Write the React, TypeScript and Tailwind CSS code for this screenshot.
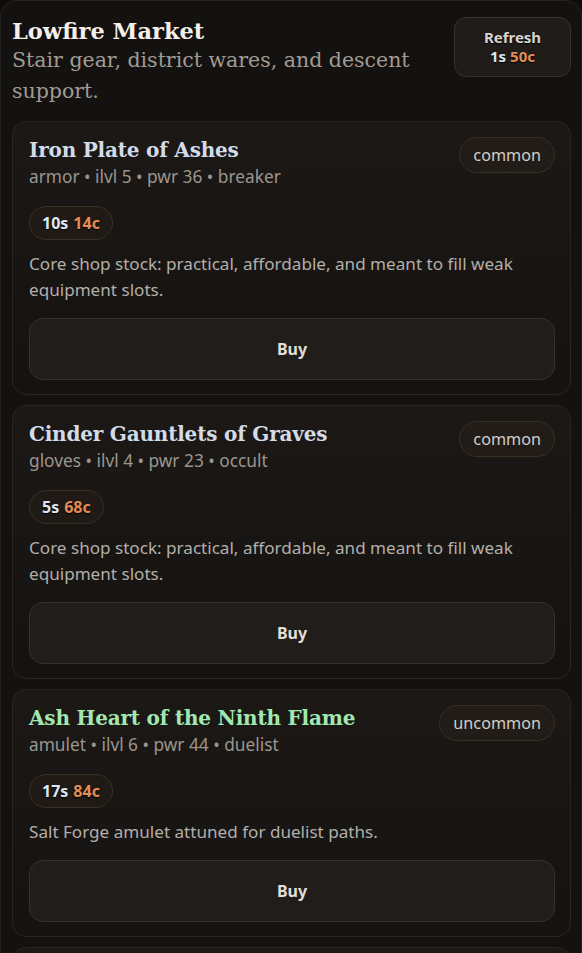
import React from "react";

type Item = {
  name: string;
  meta: string;
  s: string;
  c: string;
  desc: string;
  rarity: string;
  green?: boolean;
};

const items: Item[] = [
  {
    name: "Iron Plate of Ashes",
    meta: "armor • ilvl 5 • pwr 36 • breaker",
    s: "10s",
    c: "14c",
    desc: "Core shop stock: practical, affordable, and meant to fill weak equipment slots.",
    rarity: "common",
  },
  {
    name: "Cinder Gauntlets of Graves",
    meta: "gloves • ilvl 4 • pwr 23 • occult",
    s: "5s",
    c: "68c",
    desc: "Core shop stock: practical, affordable, and meant to fill weak equipment slots.",
    rarity: "common",
  },
  {
    name: "Ash Heart of the Ninth Flame",
    meta: "amulet • ilvl 6 • pwr 44 • duelist",
    s: "17s",
    c: "84c",
    desc: "Salt Forge amulet attuned for duelist paths.",
    rarity: "uncommon",
    green: true,
  },
];

const serif = { fontFamily: '"DejaVu Serif", Georgia, serif' };
const sans = { fontFamily: '"Noto Sans", "Open Sans", sans-serif' };

function Card({ it }: { it: Item }) {
  return (
    <div className="rounded-[14px] border border-[#2a251e] bg-gradient-to-b from-[#1b1816] to-[#151311] pl-4 pr-[15px] pt-[13px] pb-[14px]">
      <div className="flex items-start justify-between gap-3">
        <div className="flex flex-col">
          <div
            className={`text-[20px] leading-[30px] font-bold tracking-[-0.2px] ${it.green ? "text-[#a3e7b0]" : "text-[#d3dbe7]"}`}
            style={serif}
          >
            {it.name}
          </div>
          <div className="text-[17.3px] leading-[24px] text-[#9b968f]" style={sans}>
            {it.meta}
          </div>
        </div>
        <div
          className="mt-[2px] h-[36px] shrink-0 rounded-full border border-[#3a3021] bg-[#211c17] px-[13px] text-[16.2px] leading-[34px] text-[#d2cec8]"
          style={sans}
        >
          {it.rarity}
        </div>
      </div>
      <div className="mt-[17px] flex">
        <div
          className="flex h-[34px] items-center gap-[5px] rounded-full border border-[#3b3022] bg-[#1f1a15] px-[12px] text-[16px] font-bold [text-shadow:0_1px_1px_#000]"
          style={sans}
        >
          <span className="text-[#dfe7f2]">{it.s}</span>
          <span className="text-[#e38c55]">{it.c}</span>
        </div>
      </div>
      <p className="mt-[11px] text-[17.1px] leading-[26px] text-[#b3aea8]" style={sans}>
        {it.desc}
      </p>
      <button
        className="mt-[15px] h-[62px] w-full rounded-[14px] border border-[#36322e] bg-[#201d1a] text-[16px] font-bold text-[#e2ded8]"
        style={sans}
      >
        Buy
      </button>
    </div>
  );
}

export default function App() {
  return (
    <div className="h-[953px] overflow-hidden bg-[#0e0c0a]">
      <div className="min-h-[953px] rounded-t-[16px] border border-[#26221d] bg-[#141210] pl-[11px] pr-[10px] pt-[16px]">
        <div className="flex items-start justify-between gap-4">
          <div className="flex flex-col">
            <h1 className="text-[22.5px] leading-[28px] font-bold text-[#f4efe9]" style={serif}>
              Lowfire Market
            </h1>
            <p className="max-w-[420px] text-[20.5px] leading-[31px] text-[#a19b94]" style={serif}>
              Stair gear, district wares, and descent support.
            </p>
          </div>
          <button
            className="flex h-[60px] w-[117px] shrink-0 flex-col items-center justify-center rounded-[12px] border border-[#36322d] bg-[#1f1c19] text-[15px] font-bold leading-[19px] [text-shadow:0_1px_1px_#000]"
            style={sans}
          >
            <span className="text-[#d9d4ce]">Refresh</span>
            <span className="flex gap-[4px]">
              <span className="text-[#dfe7f2]">1s</span>
              <span className="text-[#e38c55]">50c</span>
            </span>
          </button>
        </div>
        <div className="mt-[14px] flex flex-col gap-[10px]">
          {items.map((it) => (
            <Card key={it.name} it={it} />
          ))}
          <div className="h-[40px] rounded-t-[14px] border border-b-0 border-[#2a251e] bg-[#1b1816]" />
        </div>
      </div>
    </div>
  );
}
